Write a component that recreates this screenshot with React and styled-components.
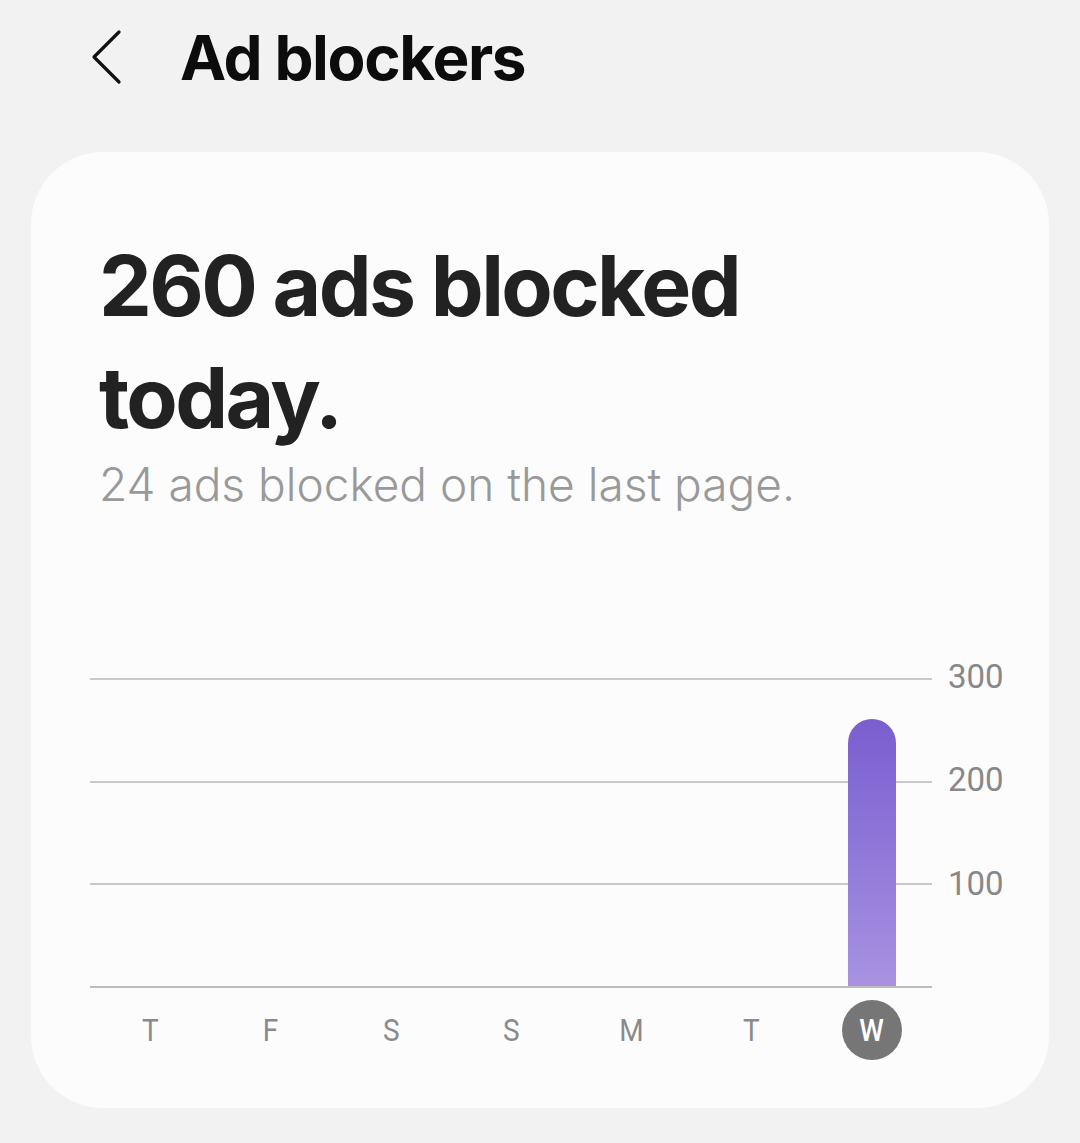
import React from "react";
import styled, { createGlobalStyle } from "styled-components";

const Global = createGlobalStyle`
  html, body { margin: 0; padding: 0; background: #f2f2f2; }
  body { font-family: Inter, "Noto Sans", sans-serif; }
`;

const Page = styled.div`
  width: 1080px;
  height: 1143px;
  background: #f2f2f2;
  display: flex;
  flex-direction: column;
  overflow: hidden;
`;

const Header = styled.header`
  height: 114px;
  display: flex;
  align-items: center;
  padding-left: 86px;
  gap: 56px;
  box-sizing: border-box;
`;

const BackButton = styled.button`
  width: 40px;
  height: 60px;
  border: 0;
  background: none;
  padding: 0;
  display: flex;
  align-items: center;
  justify-content: center;
  color: #111;
`;

const Title = styled.h1`
  margin: 0 0 0 -2px;
  font-family: Inter, sans-serif;
  font-weight: 700;
  font-size: 62px;
  letter-spacing: -1.4px;
  color: #0c0c0c;
`;

const Card = styled.section`
  margin: 38px 31px 0;
  height: 956px;
  background: #fcfcfc;
  border-radius: 72px;
  box-sizing: border-box;
  padding: 78px 0 0;
  display: flex;
  flex-direction: column;
`;

const Summary = styled.div`
  padding: 0 68px;
`;

const Headline = styled.h2`
  margin: 0;
  font-family: Inter, sans-serif;
  font-weight: 700;
  font-size: 84px;
  line-height: 112px;
  color: #222;
  letter-spacing: -2.6px;
`;

const Subline = styled.p`
  margin: 0;
  font-family: Inter, sans-serif;
  font-weight: 300;
  font-size: 46px;
  line-height: 60px;
  color: #999;
`;

const Chart = styled.div`
  margin: 164px 0 0 59px;
  display: grid;
  grid-template-columns: 842px auto;
  grid-template-rows: 310px auto;
  column-gap: 16px;
`;

const Plot = styled.div`
  display: grid;
  grid-template: 1fr / 1fr;
`;

const Grid = styled.div`
  grid-area: 1 / 1;
  display: flex;
  flex-direction: column;
`;

const GridRow = styled.div`
  flex: 1;
  border-top: 2px solid #c9c9c9;
  ${(p) => p.$last && "border-bottom: 2px solid #bdbdbd;"}
`;

const Bars = styled.div`
  grid-area: 1 / 1;
  display: grid;
  grid-template-columns: repeat(7, 1fr);
  align-items: end;
  padding-bottom: 2px;
`;

const BarSlot = styled.div`
  display: flex;
  justify-content: center;
  height: 100%;
  align-items: flex-end;
`;

const Bar = styled.div`
  width: 48px;
  border-radius: 24px 24px 0 0;
  background: linear-gradient(180deg, #7a5ecf 0%, #8e76d8 45%, #a892e0 100%);
`;

const YAxis = styled.div`
  display: flex;
  flex-direction: column;
`;

const YTick = styled.div`
  flex: 1;
  font-family: Roboto, sans-serif;
  font-size: 33px;
  line-height: 38px;
  color: #888;
  transform: translateY(-20px);
`;

const Days = styled.div`
  display: grid;
  grid-template-columns: repeat(7, 1fr);
  padding-top: 12px;
`;

const Day = styled.div`
  display: flex;
  justify-content: center;
`;

const DayBadge = styled.span`
  width: 60px;
  height: 60px;
  border-radius: 50%;
  display: flex;
  align-items: center;
  justify-content: center;
  background: ${(p) => (p.$active ? "#767676" : "transparent")};
`;

const DayText = styled.span`
  font-family: Roboto, sans-serif;
  font-size: 31px;
  color: ${(p) => (p.$active ? "#fff" : "#8a8a8a")};
  font-weight: ${(p) => (p.$active ? 500 : 400)};
  display: inline-block;
  transform: scaleX(0.9);
`;

const MAX = 300;
const data = [
  { d: "T", v: 0 },
  { d: "F", v: 0 },
  { d: "S", v: 0 },
  { d: "S", v: 0 },
  { d: "M", v: 0 },
  { d: "T", v: 0 },
  { d: "W", v: 260, active: true },
];

export default function App() {
  return (
    <Page>
      <Global />
      <Header>
        <BackButton aria-label="Back">
          <svg width="34" height="56" viewBox="0 0 34 56" fill="none">
            <path d="M30 3 L5 28 L30 53" stroke="#111" strokeWidth="3.2" strokeLinecap="round" strokeLinejoin="round" />
          </svg>
        </BackButton>
        <Title>Ad blockers</Title>
      </Header>
      <Card>
        <Summary>
          <Headline>
            260 ads blocked
            <br />
            today.
          </Headline>
          <Subline>24 ads blocked on the last page.</Subline>
        </Summary>
        <Chart>
          <Plot>
            <Grid>
              <GridRow />
              <GridRow />
              <GridRow $last />
            </Grid>
            <Bars>
              {data.map((x, i) => (
                <BarSlot key={i}>
                  {x.v > 0 && <Bar style={{ height: `${(x.v / MAX) * 100}%` }} />}
                </BarSlot>
              ))}
            </Bars>
          </Plot>
          <YAxis>
            <YTick>300</YTick>
            <YTick>200</YTick>
            <YTick>100</YTick>
          </YAxis>
          <Days>
            {data.map((x, i) => (
              <Day key={i}>
                <DayBadge $active={x.active}>
                  <DayText $active={x.active}>{x.d}</DayText>
                </DayBadge>
              </Day>
            ))}
          </Days>
        </Chart>
      </Card>
    </Page>
  );
}
